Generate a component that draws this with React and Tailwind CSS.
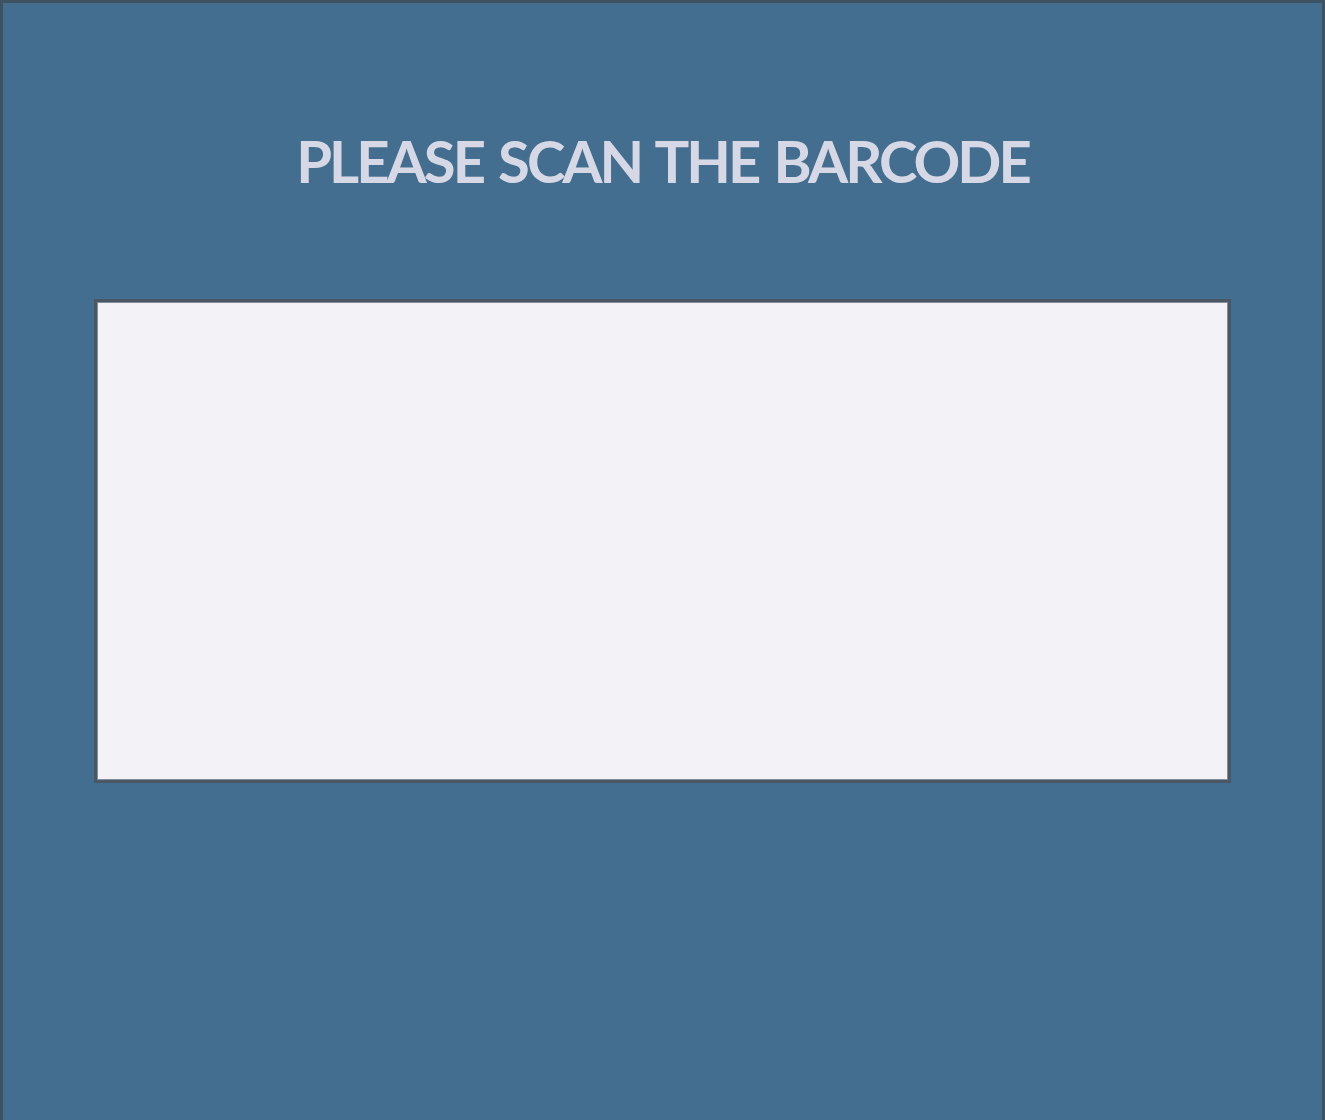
import React from 'react';

export default function App() {
  return (
    <div className="h-[1120px] w-[1325px] overflow-hidden bg-[#436e8f] border-[3px] border-b-0 border-[#3f5262] box-border">
      <div className="flex flex-col items-center">
        <h1
          className="mt-[118px] h-[80px] text-[58px] leading-[80px] font-bold text-[#d6d9e5] tracking-[-3px] [word-spacing:4px]"
          style={{ fontFamily: 'Lato, "Open Sans", sans-serif' }}
        >
          PLEASE SCAN THE BARCODE
        </h1>
        <div className="mt-[98px] ml-[-1px] w-[1137px] h-[484px] border-[3px] border-[#4a5866] bg-[#f2f2f7]">
          <div className="h-full w-full border border-[#858d9b]" />
        </div>
      </div>
    </div>
  );
}
